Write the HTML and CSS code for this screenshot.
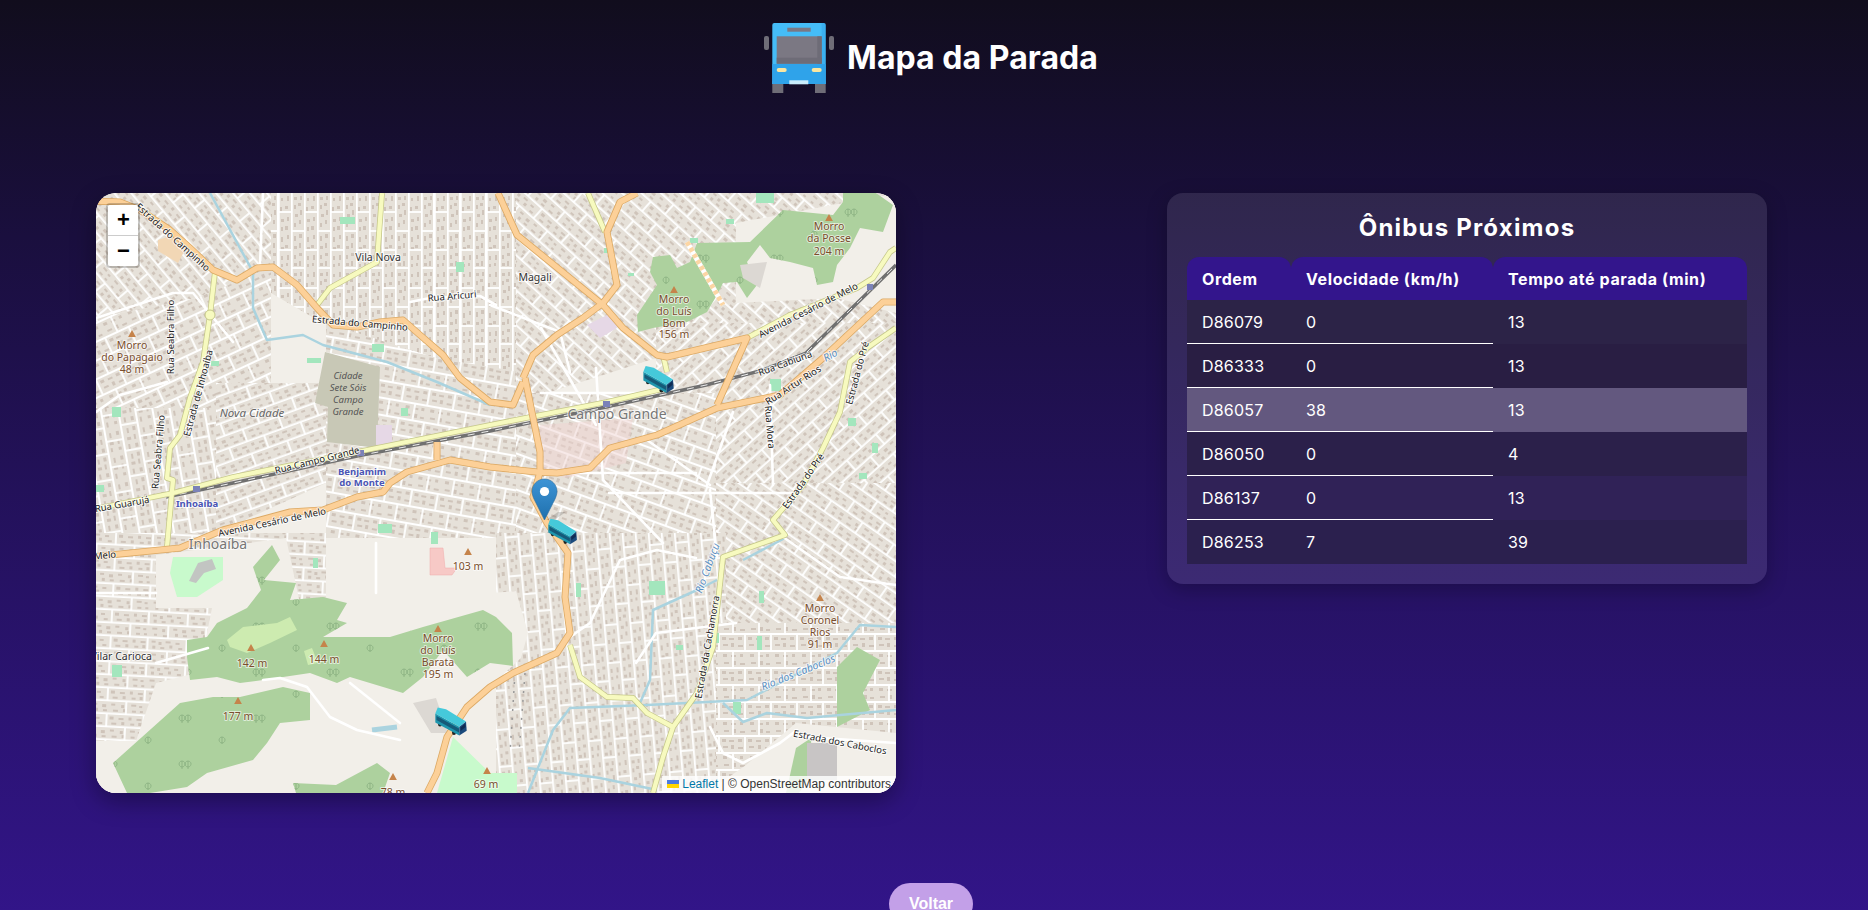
FILE: index.html
```html
<!DOCTYPE html>
<html lang="pt-BR">
<head>
<meta charset="utf-8">
<title>Mapa da Parada</title>
<link rel="stylesheet" href="styles.css">
</head>
<body>
<div class="page">
  <header class="head">
    <svg class="head-icon" viewBox="0 0 70 70" aria-hidden="true">
      <rect class="g1" x="0" y="13" width="5" height="14" rx="2"/>
      <rect class="g1" x="65" y="13" width="5" height="14" rx="2"/>
      <rect class="g1" x="8.3" y="58" width="11" height="12"/>
      <rect class="g1" x="51" y="58" width="10.7" height="12"/>
      <path class="b1" d="M10.3 0H59.7a2 2 0 0 1 2 2V61H8.3V2a2 2 0 0 1 2-2z"/>
      <path class="b2" d="M8.3 41H61.7V61H8.3z"/>
      <path class="b3" d="M57.7 0h2a2 2 0 0 1 2 2V61h-4z"/>
      <rect class="g2" x="23.3" y="4.7" width="23.4" height="4"/>
      <rect class="g2" x="12.7" y="13.3" width="45" height="27.4"/>
      <rect class="g3" x="53.3" y="13.3" width="4.4" height="27.4"/>
      <rect class="g3" x="12.7" y="34.7" width="45" height="6"/>
      <rect class="lt" x="12.7" y="45" width="10" height="4" rx="2"/>
      <rect class="lt" x="47.7" y="45" width="10" height="4" rx="2"/>
      <rect class="plate" x="25.3" y="57.3" width="19" height="4"/>
    </svg>
    <h1 class="title">Mapa da Parada</h1>
  </header>

  <main class="content">
    <section class="map">
      <svg class="map-svg" viewBox="0 0 800 600" aria-label="Mapa">
        <defs>
          <pattern id="s" width="76" height="26" patternUnits="userSpaceOnUse">
            <rect class="blk" width="76" height="26"/>
            <path class="spk" d="M3 2h4v2H3zM10 3h3v3h-3zM17 2h5v2h-5zM27 3h4v2h-4zM4 7h3v3H4zM12 8h4v2h-4zM21 6h3v3h-3zM30 8h4v2h-4zM41 2h4v3h-4zM50 3h5v2h-5zM60 2h3v3h-3zM68 3h5v2h-5zM43 8h5v2h-5zM53 7h3v3h-3zM62 8h4v2h-4zM70 7h3v3h-3zM3 15h5v2H3zM13 16h3v3h-3zM24 15h4v2h-4zM33 16h4v3h-4zM5 21h3v2H5zM14 22h5v2h-5zM26 20h3v3h-3zM34 21h4v2h-4zM42 15h4v2h-4zM52 16h3v3h-3zM62 15h5v2h-5zM70 16h3v2h-3zM44 21h5v2h-5zM54 20h3v3h-3zM63 21h4v2h-4zM71 21h3v2h-3z"/>
            <path class="str" d="M0 12.200H76M0 25.200H76M38 0V12.200M75 0V12.200M19 12.200V25.200M57 12.200V25.200"/>
          </pattern>
          <pattern id="t" width="52" height="34" patternUnits="userSpaceOnUse">
            <rect class="blk" width="52" height="34"/>
            <path class="spk" d="M2 2h4v3H2zM9 3h5v2H9zM18 2h4v3h-4zM3 9h5v2H3zM11 8h3v4h-3zM18 10h5v2h-5zM28 2h4v3h-4zM36 3h5v2h-5zM45 2h4v3h-4zM29 9h5v2h-5zM38 8h3v4h-3zM45 10h5v2h-5zM3 19h4v3H3zM11 20h5v2h-5zM20 19h3v3h-3zM4 27h5v2H4zM13 26h3v4h-3zM20 28h5v2h-5zM30 19h4v3h-4zM38 20h5v2h-5zM46 19h3v3h-3zM31 27h5v2h-5zM40 26h3v4h-3zM46 28h4v2h-4z"/>
            <path class="str" d="M0 16H52M0 33H52M25 0V16M51 0V16M13 16V33M39 16V33"/>
          </pattern>
          <pattern id="p50" href="#s" patternTransform="rotate(50)"/>
          <pattern id="m25" href="#t" patternTransform="rotate(-25)"/>
          <pattern id="p90" href="#s" patternTransform="rotate(90)"/>
          <pattern id="p80" href="#t" patternTransform="rotate(80)"/>
          <pattern id="m20" href="#s" patternTransform="rotate(-20)"/>
          <pattern id="p10" href="#t" patternTransform="rotate(10)"/>
          <pattern id="p42" href="#s" patternTransform="rotate(42)"/>
          <pattern id="m42" href="#s" patternTransform="rotate(-42)"/>
          <pattern id="p20" href="#t" patternTransform="rotate(20)"/>
          <pattern id="p35" href="#s" patternTransform="rotate(35)"/>
          <pattern id="p85" href="#s" patternTransform="rotate(85)"/>
          <pattern id="p0" href="#t"/>
          <pattern id="p8" href="#s" patternTransform="rotate(3)"/>
          <pattern id="tree" width="74" height="46" patternUnits="userSpaceOnUse">
            <path class="tr" d="M12 16v8M12 16a3 3 0 1 0 .1 0zM18 16v8M18 16a3 3 0 1 0 .1 0zM52 38v7M52 38a3 3 0 1 0 .1 0z"/>
          </pattern>
          <linearGradient id="pinfill" x1="0" y1="0" x2="0" y2="1">
            <stop class="pin-a" offset="0"/>
            <stop class="pin-b" offset="1"/>
          </linearGradient>
          <symbol id="bus" viewBox="0 0 34 30">
            <ellipse class="wh" cx="5" cy="16.500" rx="2" ry="2.500"/>
            <ellipse class="wh" cx="19" cy="25" rx="2" ry="2.500"/>
            <path class="bs" d="M.3 6 24.300 19.300V28L.3 15z"/>
            <path class="bw" d="M1.500 8.500 24 21v4L1.500 12.500z"/>
            <path class="bf" d="M24.300 19.300 31 14l.7 9.300L24.300 28z"/>
            <path class="bg" d="M25.500 20 30.300 16l.3 3.500-5 4z"/>
            <path class="br" d="M2.700 0 11 1.700 31 14l-6.700 5.300L.3 6z"/>
          </symbol>
          <symbol id="tri" viewBox="0 0 10 9"><path class="peak" d="M5 0 10 9H0z"/></symbol>
        </defs>

        <rect class="land" width="800" height="600"/>
        <path fill="url(#p50)" d="M0 0H175V75L100 105 0 125Z"/>
        <path fill="url(#m25)" d="M0 125 100 105 175 75V190L120 215H0Z"/>
        <path fill="url(#p90)" d="M175 0H420V180L340 165 235 135 175 100Z"/>
        <path fill="url(#p80)" d="M0 215H120V350H0Z"/>
        <path fill="url(#m20)" d="M120 190H230V290L120 340Z"/>
        <path fill="url(#p10)" d="M230 130 340 165 430 180V345H230Z"/>
        <path fill="url(#p42)" d="M420 0H560V165L420 210Z"/>
        <path fill="url(#p42)" d="M560 0H800V130H560Z"/>
        <path fill="url(#m42)" d="M560 130H800V300H620L560 240Z"/>
        <path fill="url(#p20)" d="M420 200H620V350H420Z"/>
        <path fill="url(#p35)" d="M620 290H800V440H620Z"/>
        <path fill="url(#p85)" d="M400 340H630V600H400Z"/>
        <path fill="url(#p0)" d="M620 430H800V600H620Z"/>
        <path fill="url(#p8)" d="M0 340H230V600H0Z"/>

        <path class="land" d="M60 362 190 345 205 415H330V360H390L404 420 396 500 350 530 340 600H0V548H40L60 490 100 480 110 445 116 415H60Z"/>
        <path class="land" d="M396 400 420 398 432 440 425 465 398 490Z"/>
        <path class="land" d="M700 530 800 540V600H610L650 572Z"/>
        <path class="land" d="M640 30 800 0V120L740 105 640 110Z"/>

        <g class="forest">
          <path id="f1" d="M91 447 111 444 121 430 151 415 165 397 157 374 176 352 184 367 168 387 200 390 194 407 227 404 251 410 241 427 251 430 227 444 294 444 327 434 387 417 400 424 416 440 417 473 394 470 371 484 347 457 327 484 307 500 254 484 241 490 214 480 167 487 144 490 121 484 94 487 91 464Z"/>
          <path id="f2" d="M17 570 84 510 117 504 144 504 187 494 214 500 214 527 184 530 171 550 157 567 111 580 91 594 54 600H31Z"/>
          <path id="f3" d="M197 590 240 592 281 570 294 580 287 600H200Z"/>
          <path id="f4" d="M601 50 654 49 687 17 737 22 747 9V0H780L797 12 787 39 764 35 754 55 741 72 737 89 721 92 717 75 694 69 674 65 664 52 651 69 661 92 651 105 641 89 627 90 621 102 611 119 591 129 557 135 542 139 541 122 561 92 554 79 557 64 574 62 581 75 594 69Z"/>
          <path id="f5" d="M741 474 761 454 784 467 767 500 774 517 741 534Z"/>
          <path id="f6" d="M700 555 715 545 716 580 703 600H690Z"/>
        </g>
        <g class="trees">
          <use href="#f1"/><use href="#f2"/><use href="#f3"/><use href="#f4"/>
        </g>
        <path class="meadow" d="M131 447 147 434 181 430 194 424 201 437 174 450 151 460 134 454Z"/>
        <path class="meadow" d="M208 458 216 455 222 470 212 472Z"/>
        <path class="park" d="M77 364H127V387L101 404H81L74 380Z"/>
        <path class="park" d="M357 544 394 580 421 580V600H341Z"/>
        <path class="pool" d="M93 388 102 370 116 366 120 376 108 380 100 390Z"/>
        <path class="mil" d="M229 159 284 174 281 255 231 249 232 214 219 210Z"/>
        <path class="ind" d="M334 355H347L349 375H361L356 382H334Z"/>
        <path class="com" d="M444 232 537 225 530 270 470 285 444 279Z"/>
        <path class="lil" d="M491 132 517 119 521 135 504 145Z"/>
        <path class="lil" d="M280 232 296 232 296 250 280 252Z"/>
        <path class="qry" d="M644 72 671 69 664 95 647 85Z"/>
        <path class="qry2" d="M711 550H741V587H711Z"/>
        <path class="ter" d="M62 47 78 42 90 55 82 70 62 58Z"/>
        <path class="qry" d="M317 510 340 505 352 540 335 540Z"/>

        <g class="gr">
          <rect x="244" y="24" width="15" height="7"/><rect x="276" y="151" width="12" height="8"/>
          <rect x="115" y="168" width="8" height="5"/><rect x="211" y="165" width="14" height="5"/>
          <rect x="16" y="214" width="9" height="10"/><rect x="360" y="69" width="8" height="10"/>
          <rect x="305" y="215" width="7" height="8"/><rect x="0" y="292" width="8" height="7"/>
          <rect x="282" y="331" width="14" height="9"/><rect x="335" y="339" width="7" height="12"/>
          <rect x="217" y="365" width="5" height="10"/><rect x="16" y="472" width="10" height="12"/>
          <rect x="674" y="186" width="11" height="12"/><rect x="532" y="80" width="6" height="3"/>
          <rect x="663" y="398" width="5" height="12"/><rect x="661" y="443" width="5" height="14"/>
          <rect x="637" y="509" width="8" height="12"/><rect x="553" y="388" width="16" height="14"/>
          <rect x="617" y="440" width="6" height="10"/><rect x="480" y="390" width="5" height="14"/>
          <rect x="580" y="452" width="7" height="5"/><rect x="763" y="280" width="8" height="6"/>
          <rect x="594" y="45" width="8" height="5"/><rect x="630" y="26" width="8" height="5"/>
          <rect x="660" y="0" width="18" height="10"/><rect x="508" y="55" width="6" height="5"/>
          <rect x="752" y="225" width="8" height="8"/><rect x="776" y="250" width="6" height="10"/>
        </g>

        <g class="riv">
          <path d="M114 0 157 79V115L171 147 207 142 227 152 291 169 341 189 394 212"/>
          <path d="M432 600 457 537 474 515 551 512 651 507 741 460 764 432 800 434"/>
          <path d="M627 510 647 529 671 520 711 525 800 517"/>
          <path d="M544 510 554 487 557 417 601 397 621 387"/>
          <path d="M689 345 647 367"/>
          <path d="M432 575 504 585 561 597"/>
          <path class="w" d="M276 537 301 534"/>
        </g>

        <g class="wht">
          <path d="M0 125 77 100H97L137 149"/>
          <path d="M167 0 164 72"/>
          <path d="M314 109 334 105 384 103 400 112"/>
          <path d="M71 189 24 202 0 219"/>
          <path d="M394 112 464 139 474 179"/>
          <path d="M551 247 614 292"/>
          <path d="M611 292 637 219"/>
          <path d="M674 192 677 292"/>
          <path d="M507 287 567 350"/>
          <path d="M494 430 524 367 561 357 600 365"/>
          <path d="M474 444 494 430"/>
          <path d="M614 297 621 364"/>
          <path d="M687 344 744 384 800 392"/>
          <path d="M701 537 684 550 647 570 627 560 614 534"/>
          <path d="M711 544 800 550"/>
          <path d="M167 487 184 485 211 494 234 524 261 537 304 547"/>
          <path d="M254 490 304 530"/>
          <path d="M445 200 560 200"/>
          <path d="M445 135 500 232"/>
          <path d="M500 175 507 287"/>
          <path d="M470 280H600"/>
          <path d="M0 400H60"/>
          <path d="M280 350V400"/>
          <path d="M513 300H700"/>
          <path d="M540 470 560 440 640 430"/>
          <path d="M60 470 112 455"/>
        </g>

        <path class="yard" d="M419 480 414 560M429 480 423 560"/>
        <path class="rail" d="M70 304 137 290 261 263 394 238 510 214 610 192 664 178 710 160 800 72"/>
        <path class="rail-d" d="M70 304 137 290 261 263 394 238 510 214 610 192 664 178 710 160 800 72"/>

        <g class="case-y">
          <path id="ya" d="M119 79 114 122 107 169 94 205 84 242 74 255 71 285 77 287 71 354"/>
          <path id="yb" d="M286 0 281 69 234 95 221 112"/>
          <path id="yc" d="M-6 317 77 300 137 284 261 259 394 232 511 209 571 195"/>
          <path id="yd" d="M651 145 694 122 761 95 777 85 794 59 800 55"/>
          <path id="ye" d="M800 135 771 155 754 169 744 219 727 255 707 292 677 327 689 342 627 364 617 454 601 500 577 534 567 564 557 600"/>
          <path id="yf" d="M474 452 484 484 511 504 537 505 551 520 577 534"/>
          <path id="yg" d="M492 0 509 39M567 162 571 179"/>
        </g>
        <g class="fill-y">
          <use href="#ya"/><use href="#yb"/><use href="#yc"/><use href="#yd"/><use href="#ye"/><use href="#yf"/><use href="#yg"/>
        </g>
        <g class="case-o">
          <path id="oa" d="M-5 8 24 9 44 17 74 37 94 55 117 77 141 87 161 75 177 74 201 92 221 115 237 132 261 134 284 129 307 127 324 142 347 162 364 185 394 209 417 212 427 189"/>
          <path id="ob" d="M427 185 437 162 461 142 487 125 507 110 521 92 511 39 524 9 541 0"/>
          <path id="oc" d="M429 185 444 259V279L437 304 451 330 472 360 469 404 474 440 461 460 417 480 394 494 371 514 351 544 341 580 331 600"/>
          <path id="od" d="M402 0 421 42 507 112 527 135 561 162 571 164 651 145 621 212"/>
          <path id="oe" d="M800 109H787L727 165 684 202 621 215 561 242 514 255 494 275 461 280 441 279 394 274 354 267 311 279 294 290 287 299 261 304 227 317 194 319 127 337 84 355-6 364"/>
          <path id="of" d="M341 249V267"/>
        </g>
        <g class="fill-o">
          <use href="#oa"/><use href="#ob"/><use href="#oc"/><use href="#od"/><use href="#oe"/><use href="#of"/>
        </g>
        <path class="ghost" d="M591 49 627 112"/>
        <path class="ghost-d" d="M591 49 627 112"/>
        <circle class="rb" cx="114" cy="122" r="5"/>

        <g class="stn">
          <rect x="261" y="257" width="7" height="6"/><rect x="97" y="293" width="7" height="6"/>
          <rect x="507" y="208" width="7" height="6"/><rect x="771" y="91" width="6" height="6"/>
        </g>

        <use href="#tri" x="32" y="137" width="8" height="7"/>
        <use href="#tri" x="151" y="451" width="8" height="7"/>
        <use href="#tri" x="224" y="447" width="8" height="7"/>
        <use href="#tri" x="138" y="504" width="8" height="7"/>
        <use href="#tri" x="368" y="355" width="8" height="7"/>
        <use href="#tri" x="338" y="432" width="8" height="7"/>
        <use href="#tri" x="293" y="580" width="8" height="7"/>
        <use href="#tri" x="387" y="574" width="8" height="7"/>
        <use href="#tri" x="574" y="93" width="8" height="7"/>
        <use href="#tri" x="729" y="21" width="8" height="7"/>
        <use href="#tri" x="720" y="401" width="8" height="7"/>

        <g class="lb-road">
          <text transform="translate(77 44) rotate(42)">Estrada do Campinho</text>
          <text transform="translate(264 130) rotate(5)">Estrada do Campinho</text>
          <text transform="translate(356 103) rotate(-5)">Rua Aricuri</text>
          <text transform="translate(74 144) rotate(-90)">Rua Seabra Filho</text>
          <text transform="translate(102 200) rotate(-75)">Estrada de Inhoaíba</text>
          <text transform="translate(62 259) rotate(-85)">Rua Seabra Filho</text>
          <text transform="translate(221 267) rotate(-14)">Rua Campo Grande</text>
          <text transform="translate(26 311) rotate(-10)">Rua Guarujá</text>
          <text transform="translate(176 329) rotate(-12)">Avenida Cesário de Melo</text>
          <text transform="translate(9 362) rotate(-5)">Melo</text>
          <text transform="translate(712 117) rotate(-27)">Avenida Cesário de Melo</text>
          <text transform="translate(689 170) rotate(-20)">Rua Cabiuna</text>
          <text transform="translate(697 192) rotate(-33)">Rua Artur Rios</text>
          <text transform="translate(674 234) rotate(85)">Rua Mora</text>
          <text transform="translate(761 180) rotate(-75)">Estrada do Pré</text>
          <text transform="translate(707 288) rotate(-55)">Estrada do Pré</text>
          <text transform="translate(611 454) rotate(-80)">Estrada da Cachamorra</text>
          <text transform="translate(744 549) rotate(11)">Estrada dos Caboclos</text>
        </g>
        <g class="lb-water">
          <text transform="translate(734 162) rotate(-30)">Rio</text>
          <text transform="translate(611 375) rotate(-70)">Rio Cabuçu</text>
          <text transform="translate(702 479) rotate(-22)">Rio dos Caboclos</text>
        </g>
        <g class="lb-peak">
          <text x="36" y="152">Morro</text><text x="36" y="164">do Papagaio</text><text x="36" y="176">48 m</text>
          <text x="156" y="470">142 m</text><text x="228" y="466">144 m</text><text x="142" y="523">177 m</text>
          <text x="372" y="373">103 m</text>
          <text x="342" y="445">Morro</text><text x="342" y="457">do Luís</text><text x="342" y="469">Barata</text><text x="342" y="481">195 m</text>
          <text x="297" y="599">78 m</text><text x="390" y="591">69 m</text>
          <text x="578" y="106">Morro</text><text x="578" y="118">do Luís</text><text x="578" y="130">Bom</text><text x="578" y="141">156 m</text>
          <text x="733" y="33">Morro</text><text x="733" y="45">da Posse</text><text x="733" y="58">204 m</text>
          <text x="724" y="415">Morro</text><text x="724" y="427">Coronel</text><text x="724" y="439">Rios</text><text x="724" y="451">91 m</text>
        </g>
        <g class="lb-sub">
          <text x="282" y="64">Vila Nova</text>
          <text x="439" y="84">Magali</text>
          <text class="end" x="56" y="463">Vilar Carioca</text>
        </g>
        <g class="lb-dist">
          <text x="521" y="220">Campo Grande</text>
          <text x="122" y="350">Inhoaíba</text>
        </g>
        <text class="lb-it" x="156" y="219">Nova Cidade</text>
        <g class="lb-mil">
          <text x="252" y="182">Cidade</text><text x="252" y="194">Sete Sóis</text><text x="252" y="206">Campo</text><text x="252" y="218">Grande</text>
        </g>
        <g class="lb-stn">
          <text x="266" y="278">Benjamim</text><text x="266" y="289">do Monte</text><text x="101" y="310">Inhoaíba</text>
        </g>

        <use href="#bus" x="547" y="173" width="33" height="29"/>
        <g transform="translate(436 286)">
          <path class="pin-sh" d="M14 41 26 33 34 33 22 41Z"/>
          <path class="pin" d="M12.500 0C5.600 0 0 5.600 0 12.500c0 2.500 1 5.500 2.500 8.500L12.500 41l10-20c1.500-3 2.500-6 2.500-8.500C25 5.600 19.400 0 12.500 0z"/>
          <circle class="pin-c" cx="12.500" cy="12.500" r="4.600"/>
        </g>
        <use href="#bus" x="452" y="325" width="31" height="29"/>
        <use href="#bus" x="339" y="514" width="34" height="31"/>
      </svg>

      <div class="zoom">
        <a class="zoom-btn zoom-in">+</a>
        <a class="zoom-btn">&#8722;</a>
      </div>
      <div class="attrib">
        <svg class="flag" viewBox="0 0 12 8" aria-hidden="true"><rect class="fl-b" width="12" height="4"/><rect class="fl-y" y="4" width="12" height="4"/></svg>
        <a class="attrib-link">Leaflet</a> | © OpenStreetMap contributors
      </div>
    </section>

    <section class="card">
      <h2 class="card-title">Ônibus Próximos</h2>
      <table class="tbl">
        <thead>
          <tr><th class="c1">Ordem</th><th class="c2">Velocidade (km/h)</th><th class="c3">Tempo até parada (min)</th></tr>
        </thead>
        <tbody>
          <tr class="r1"><td>D86079</td><td>0</td><td>13</td></tr>
          <tr class="r2"><td>D86333</td><td>0</td><td>13</td></tr>
          <tr class="r3"><td>D86057</td><td>38</td><td>13</td></tr>
          <tr class="r4"><td>D86050</td><td>0</td><td>4</td></tr>
          <tr class="r5"><td>D86137</td><td>0</td><td>13</td></tr>
          <tr class="r6"><td>D86253</td><td>7</td><td>39</td></tr>
        </tbody>
      </table>
    </section>
  </main>

  <div class="actions"><button class="back" type="button">Voltar</button></div>
</div>
</body>
</html>
```
FILE: styles.css
```css
html { scrollbar-width: none; }
body {
  margin: 0;
  min-height: 945px;
  background: linear-gradient(180deg, #110d1d 0%, #1a0f3e 25%, #33158c 100%);
  color: #fff;
  font-family: Inter, "Noto Sans", sans-serif;
}
.page { width: calc(100% - 6px); }

.head {
  display: flex;
  justify-content: center;
  align-items: center;
  gap: 13px;
  padding-top: 23px;
}
.head-icon { width: 70px; height: 70px; flex: none; }
.title {
  margin: 0;
  font-size: 32px;
  font-weight: 700;
  line-height: 40px;
  letter-spacing: .05px;
}
.g1 { fill: #6f6d77; }
.g2 { fill: #7b7883; }
.g3 { fill: #6e6c77; }
.b1 { fill: #45bdf7; }
.b2 { fill: #2fa3ea; }
.b3 { fill: #2f9fe6; opacity: .45; }
.lt { fill: #fbe6a0; }
.plate { fill: #c9ecfb; }

.content {
  display: flex;
  justify-content: space-between;
  align-items: flex-start;
  margin-top: 100px;
  padding: 0 95px 0 96px;
}

.map {
  position: relative;
  width: 800px;
  height: 600px;
  border-radius: 20px;
  overflow: hidden;
  box-shadow: 0 8px 24px rgba(0, 0, 0, .35);
  flex: none;
}
.map-svg { display: block; width: 800px; height: 600px; }

.land { fill: #f2efe9; }
.blk { fill: #e6e1d9; }
.spk { fill: #cfc4ba; }
.str { fill: none; stroke: #fff; stroke-width: 1.800; }
.tr { fill: none; stroke: #86ad7e; stroke-width: .8; }
.forest { fill: #add19e; }
.trees { fill: url(#tree); }
.meadow { fill: #cdebb0; }
.park { fill: #c8facc; }
.pool { fill: #c2c5c2; }
.mil { fill: #c8c8b6; }
.ind { fill: #f7c9c6; stroke: #eaa; stroke-width: .5; }
.com { fill: #f0d4d2; opacity: .5; }
.lil { fill: #e6d8e6; }
.qry { fill: #dcd8d3; }
.qry2 { fill: #c8c5c5; }
.ter { fill: #f2d7b5; }
.gr rect { fill: #a3e6bd; }

.riv { fill: none; stroke: #aad3df; stroke-width: 2.500; stroke-linejoin: round; }
.riv .w { stroke-width: 5; }
.wht { fill: none; stroke: #fff; stroke-width: 2.600; stroke-linejoin: round; stroke-linecap: round; }
.yard { fill: none; stroke: #999; stroke-width: 1.500; stroke-dasharray: 2 7; }
.rail { fill: none; stroke: #707070; stroke-width: 3.400; }
.rail-d { fill: none; stroke: #eee; stroke-width: 1; stroke-dasharray: 7 7; }
.case-y { fill: none; stroke: #c5c78a; stroke-width: 5.800; stroke-linejoin: round; }
.fill-y { fill: none; stroke: #f7fabf; stroke-width: 4.300; stroke-linejoin: round; }
.case-o { fill: none; stroke: #dca964; stroke-width: 7; stroke-linejoin: round; }
.fill-o { fill: none; stroke: #fcd098; stroke-width: 5.400; stroke-linejoin: round; }
.ghost { fill: none; stroke: #fff; stroke-width: 5; }
.ghost-d { fill: none; stroke: #fcd6a4; stroke-width: 5; stroke-dasharray: 4 3; }
.rb { fill: #f7fabf; stroke: #c5c78a; }
.stn rect { fill: #7b82b8; }
.peak { fill: #c5834a; }

.map-svg text {
  font-family: "Noto Sans", sans-serif;
  text-anchor: middle;
  dominant-baseline: central;
  paint-order: stroke;
  stroke-linejoin: round;
}
.map-svg .end { text-anchor: end; }
.lb-road { font-size: 9.500px; fill: #222; stroke: rgba(255, 255, 255, .75); stroke-width: 2px; }
.lb-water { font-size: 10.500px; font-style: italic; fill: #5a8fc2; stroke: rgba(255, 255, 255, .7); stroke-width: 2px; }
.lb-peak { font-size: 10.500px; fill: #7a4e2d; stroke: rgba(255, 255, 255, .6); stroke-width: 2px; }
.lb-sub { font-size: 10.500px; fill: #333; stroke: rgba(255, 255, 255, .8); stroke-width: 2px; }
.lb-dist { font-size: 14px; fill: #777; stroke: rgba(255, 255, 255, .7); stroke-width: 2px; }
.lb-it { font-size: 11.500px; font-style: italic; fill: #666; stroke: rgba(255, 255, 255, .6); stroke-width: 2px; }
.lb-mil { font-size: 9.500px; font-style: italic; fill: #555; }
.lb-stn { font-size: 9.500px; font-weight: 700; fill: #4a55b5; stroke: rgba(255, 255, 255, .8); stroke-width: 2px; }

.bs { fill: #1f95ad; }
.bw { fill: #165a78; }
.bf { fill: #1b4a7c; }
.bg { fill: #102c52; }
.br { fill: #45c9da; }
.wh { fill: #222; }
.pin { fill: url(#pinfill); stroke: #2a6c9e; stroke-width: .6; }
.pin-a { stop-color: #3d94d6; }
.pin-b { stop-color: #1f70ad; }
.pin-c { fill: #fff; }
.pin-sh { fill: rgba(0, 0, 0, .15); }

.zoom {
  position: absolute;
  top: 10px;
  left: 10px;
  border: 2px solid rgba(0, 0, 0, .2);
  border-radius: 4px;
  background-clip: padding-box;
  display: flex;
  flex-direction: column;
  width: 30px;
}
.zoom-btn {
  display: block;
  width: 30px;
  height: 30px;
  background: #fff;
  color: #000;
  font: 700 22px/30px "Liberation Sans", Arial, sans-serif;
  text-align: center;
  text-indent: 1px;
}
.zoom-in {
  border-bottom: 1px solid #ccc;
  border-radius: 2px 2px 0 0;
}
.zoom-btn:last-child { border-radius: 0 0 2px 2px; }

.attrib {
  position: absolute;
  right: 0;
  bottom: 0;
  padding: 0 5px;
  background: rgba(255, 255, 255, .8);
  color: #333;
  font: 12px/17px "Liberation Sans", Arial, sans-serif;
  white-space: nowrap;
}
.attrib-link { color: #0078a8; }
.flag { width: 12px; height: 8px; }
.fl-b { fill: #4c7be1; }
.fl-y { fill: #ffd500; }

.card {
  box-sizing: border-box;
  width: 600px;
  padding: 20px;
  border-radius: 16px;
  background: rgba(255, 255, 255, .1);
  box-shadow: 0 6px 20px rgba(0, 0, 0, .25);
  flex: none;
}
.card-title {
  margin: 0 0 14px;
  font-size: 24px;
  font-weight: 700;
  line-height: 30px;
  letter-spacing: 1.200px;
  text-align: center;
}
.tbl {
  width: 560px;
  table-layout: fixed;
  border-collapse: separate;
  border-spacing: 0;
  font-size: 16px;
  letter-spacing: .2px;
}
.c1 { width: 104px; }
.c2 { width: 202px; }
.tbl th {
  height: 43px;
  padding: 0 15px;
  background: #33158c;
  border-radius: 12px 12px 0 0;
  font-weight: 700;
  letter-spacing: .6px;
  text-align: left;
  box-sizing: border-box;
}
.tbl td {
  height: 44px;
  padding: 0 15px;
  box-sizing: border-box;
  border-bottom: 1px solid #fff;
}
.tbl td:last-child, .r6 td { border-bottom: 0; }
.r1 td { background: #2c2347; }
.r2 td { background: #291e43; }
.r3 td { background: #63587f; }
.r4 td { background: #2b204a; }
.r5 td { background: #302257; }
.r6 td { background: #2b204e; }

.actions {
  display: flex;
  justify-content: center;
  margin-top: 90px;
}
.back {
  width: 84px;
  padding: 12px 0;
  border: 0;
  border-radius: 25px;
  background: #c3a0e8;
  color: #fff;
  font: 700 16px/18px "Liberation Sans", Arial, sans-serif;
}
```
